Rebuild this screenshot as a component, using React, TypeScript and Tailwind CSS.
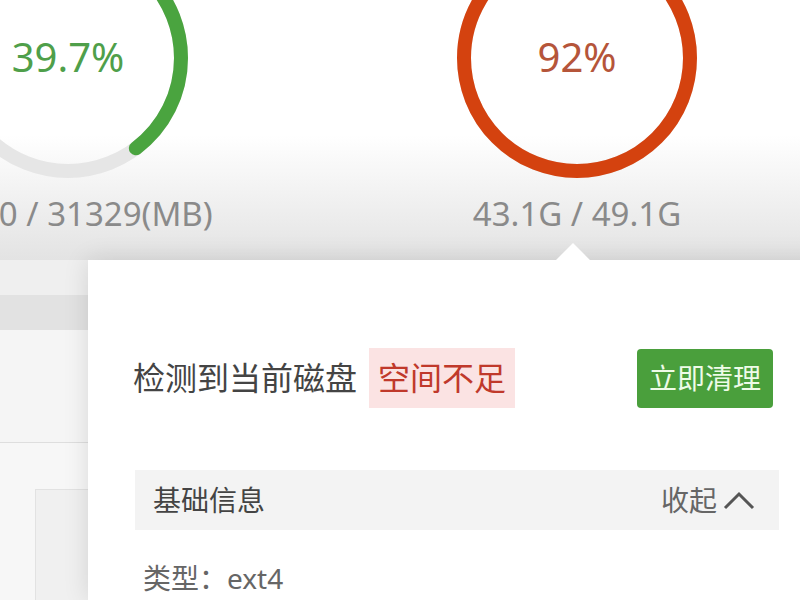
import React from "react";

const FONT = {
  fontFamily: '"Noto Sans", "Noto Sans CJK SC", sans-serif',
};

interface RingProps {
  percent: number;
  color: string;
  label: string;
  labelColor: string;
  caption: string;
}

function Ring({ percent, color, label, labelColor, caption }: RingProps) {
  const r = 113;
  const c = 2 * Math.PI * r;
  return (
    <div className="flex flex-col items-center w-[240px] shrink-0">
      <div className="relative w-[240px] h-[240px] -mt-[62px]">
        <svg width="240" height="240" viewBox="0 0 240 240">
          <circle cx="120" cy="120" r={r} fill="none" stroke="#e6e6e6" strokeWidth="14" />
          <circle
            cx="120"
            cy="120"
            r={r}
            fill="none"
            stroke={color}
            strokeWidth="14"
            strokeLinecap="round"
            strokeDasharray={`${(c * percent) / 100} ${c}`}
            transform="rotate(-90 120 120)"
          />
        </svg>
        <div
          className="absolute inset-x-0 top-[99px] text-center text-[40px] leading-none"
          style={{ color: labelColor }}
        >
          {label}
        </div>
      </div>
      <div className="mt-[16px] text-[33px] leading-[40px] text-[#8a8a8a] whitespace-nowrap">
        {caption}
      </div>
    </div>
  );
}

export default function App() {
  return (
    <div className="w-[800px] h-[600px] overflow-hidden bg-white" style={FONT}>
      <div className="h-[260px] flex gap-[269px] -ml-[52px] bg-gradient-to-b from-white from-[52%] to-[#e3e3e3]">
        <Ring percent={39.7} color="#4aa43f" label="39.7%" labelColor="#4f9f4a" caption="12440 / 31329(MB)" />
        <Ring percent={92} color="#d4420f" label="92%" labelColor="#b5553a" caption="43.1G / 49.1G" />
      </div>

      <div className="flex h-[340px]">
        <div className="w-[88px] shrink-0 flex flex-col bg-gradient-to-r from-transparent to-[#e0e0e0]">
          <div className="h-[35px] bg-[#efefef]" />
          <div className="h-[35px] bg-[#e2e2e2]" />
          <div className="h-[113px] bg-[#f5f5f5] border-b border-[#dedede]" />
          <div className="flex-1 pl-[35px] pt-[46px] bg-[#f7f7f7]">
            <div className="h-full bg-[#f0f0f0] border-t border-l border-[#e2e2e2]" />
          </div>
        </div>

        <div className="relative w-[737px] shrink-0 bg-white shadow-[0_0_24px_rgba(0,0,0,0.12)] pt-[88px] pl-[45px] pr-[46px]">
          <div className="absolute -top-[12px] left-[473px] w-6 h-6 bg-white rotate-45" />

          <div className="flex items-center justify-between pr-[6px]">
            <div className="flex items-center">
              <span className="text-[32px] leading-none text-[#444]">检测到当前磁盘</span>
              <span className="ml-[12px] h-[60px] px-[9px] flex items-center bg-[#fbe3e3] text-[32px] text-[#c0392b]">
                空间不足
              </span>
            </div>
            <button className="w-[136px] h-[59px] rounded-[4px] bg-[#4a9f3c] text-[28px] text-[#eefbe8]">
              立即清理
            </button>
          </div>

          <div className="mt-[62px] ml-[2px] h-[60px] bg-[#f3f3f3] flex items-center justify-between pl-[18px] pr-[24px]">
            <span className="text-[28px] text-[#444]">基础信息</span>
            <span className="flex items-center gap-[6px] text-[28px] text-[#666]">
              收起
              <svg width="32" height="22" viewBox="0 0 32 22" fill="none">
                <path d="M2 19 L16 5 L30 19" stroke="#555" strokeWidth="3" />
              </svg>
            </span>
          </div>

          <div className="mt-[30px] pl-[10px] text-[28px] leading-[36px] text-[#666]">类型：ext4</div>
        </div>
      </div>
    </div>
  );
}
